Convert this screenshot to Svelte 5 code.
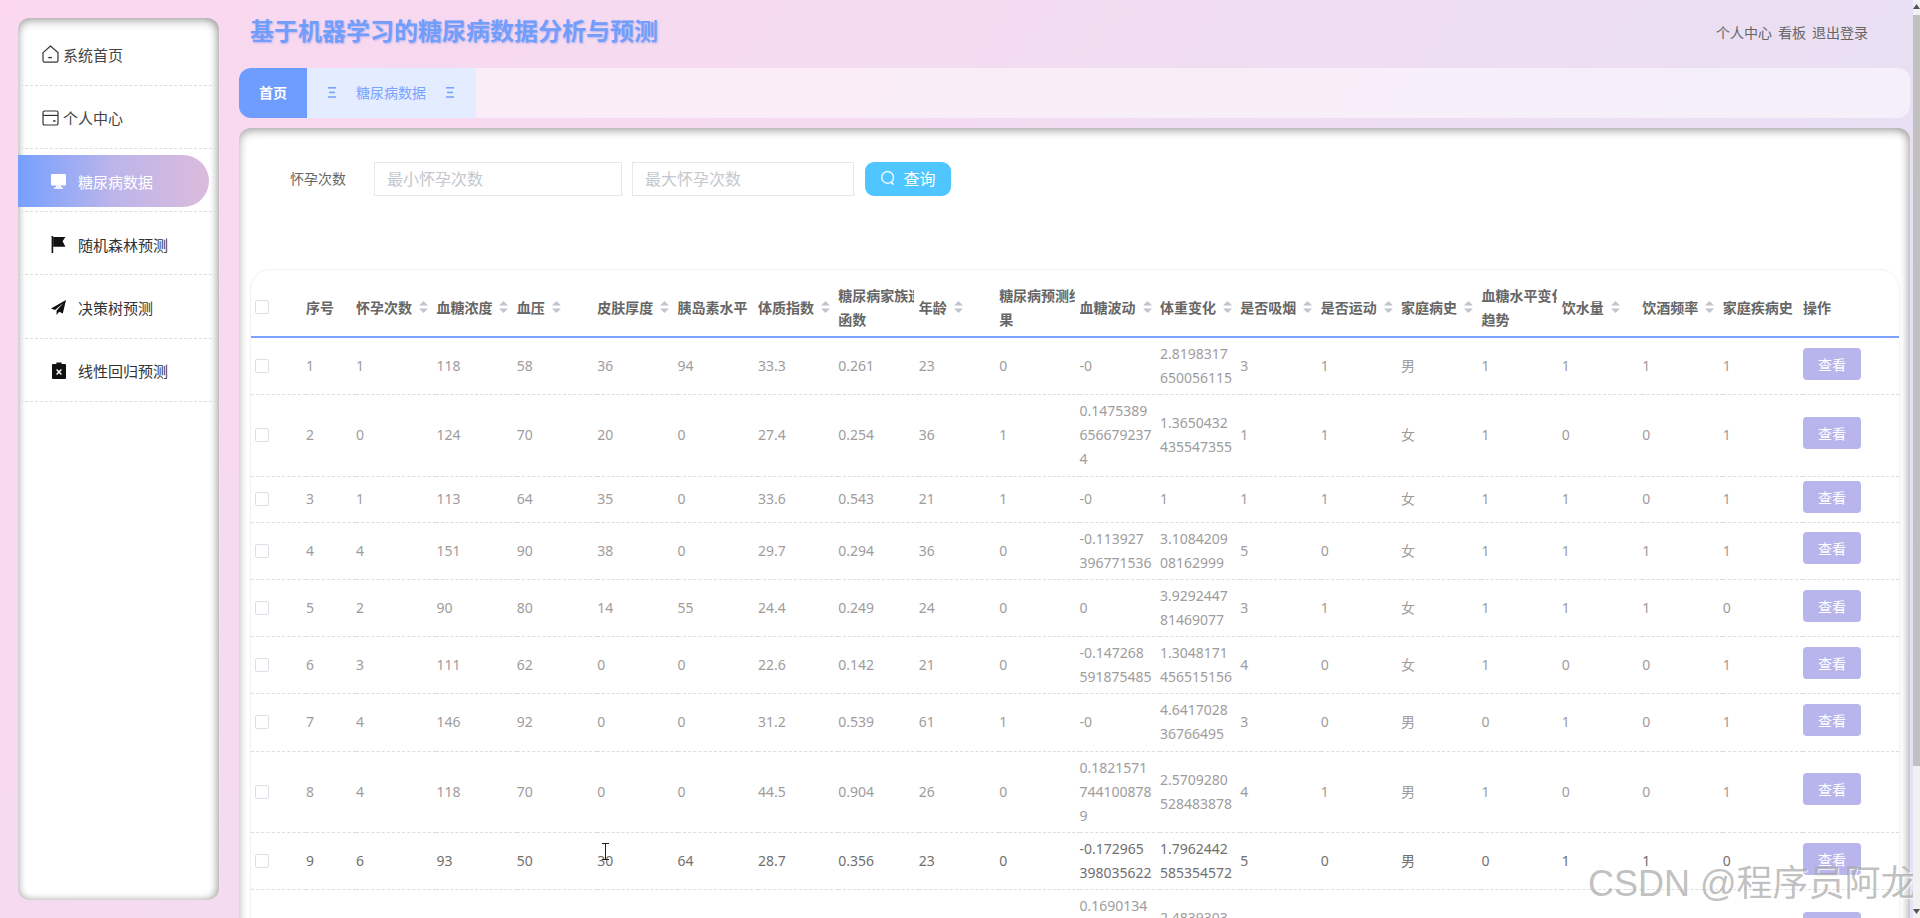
<script>
  const menu = [
    { label: '系统首页', icon: 'home' },
    { label: '个人中心', icon: 'card' },
    { label: '糖尿病数据', icon: 'monitor', active: true },
    { label: '随机森林预测', icon: 'flag' },
    { label: '决策树预测', icon: 'plane' },
    { label: '线性回归预测', icon: 'clip' }
  ];
  const headers = [
    { t: ['序号'] },
    { t: ['怀孕次数'], s: 1 },
    { t: ['血糖浓度'], s: 1 },
    { t: ['血压'], s: 1 },
    { t: ['皮肤厚度'], s: 1 },
    { t: ['胰岛素水平'] },
    { t: ['体质指数'], s: 1 },
    { t: ['糖尿病家族遗', '函数'] },
    { t: ['年龄'], s: 1 },
    { t: ['糖尿病预测结', '果'] },
    { t: ['血糖波动'], s: 1 },
    { t: ['体重变化'], s: 1 },
    { t: ['是否吸烟'], s: 1 },
    { t: ['是否运动'], s: 1 },
    { t: ['家庭病史'], s: 1 },
    { t: ['血糖水平变化', '趋势'] },
    { t: ['饮水量'], s: 1 },
    { t: ['饮酒频率'], s: 1 },
    { t: ['家庭疾病史'] },
    { t: ['操作'] }
  ];
  const rows = [
    ['1','1','118','58','36','94','33.3','0.261','23','0','-0','2.8198317\n650056115','3','1','男','1','1','1','1'],
    ['2','0','124','70','20','0','27.4','0.254','36','1','0.1475389\n656679237\n4','1.3650432\n435547355','1','1','女','1','0','0','1'],
    ['3','1','113','64','35','0','33.6','0.543','21','1','-0','1','1','1','女','1','1','0','1'],
    ['4','4','151','90','38','0','29.7','0.294','36','0','-0.113927\n396771536','3.1084209\n08162999','5','0','女','1','1','1','1'],
    ['5','2','90','80','14','55','24.4','0.249','24','0','0','3.9292447\n81469077','3','1','女','1','1','1','0'],
    ['6','3','111','62','0','0','22.6','0.142','21','0','-0.147268\n591875485','1.3048171\n456515156','4','0','女','1','0','0','1'],
    ['7','4','146','92','0','0','31.2','0.539','61','1','-0','4.6417028\n36766495','3','0','男','0','1','0','1'],
    ['8','4','118','70','0','0','44.5','0.904','26','0','0.1821571\n744100878\n9','2.5709280\n528483878','4','1','男','1','0','0','1'],
    ['9','6','93','50','30','64','28.7','0.356','23','0','-0.172965\n398035622','1.7962442\n585354572','5','0','男','0','1','1','0'],
    ['10','1','125','72','0','0','32.1','0.412','30','0','0.1690134\n582741093\n6','2.4839303\n716240581','2','1','女','1','0','1','1']
  ];
</script>

<div class="page">
  <aside class="side">
    <ul class="menu">
      {#each menu as m}
        <li class="item" class:active={m.active} class:plain={m.icon === 'home' || m.icon === 'card'}>
          <span class="mi">
            {#if m.icon === 'home'}
              <svg width="17" height="18" viewBox="0 0 17 18" fill="none" stroke="#333" stroke-width="1.2"><path d="M1 7.6 8.5 1 16 7.6V15.5a1.6 1.6 0 0 1-1.6 1.6H2.6A1.6 1.6 0 0 1 1 15.5Z"/><path d="M6.3 12.6h3.6" stroke-width="1.4"/></svg>
            {:else if m.icon === 'card'}
              <svg width="17" height="16" viewBox="0 0 17 16" fill="none" stroke="#333" stroke-width="1.2"><rect x="1" y="1" width="15" height="14" rx="1.6"/><path d="M1 5.4h15"/><path d="M11 11h2.6" stroke-width="1.4"/></svg>
            {:else if m.icon === 'monitor'}
              <svg width="15" height="15" viewBox="0 0 15 15" fill="#fff"><rect x="0" y="0" width="15" height="11.5" rx="1"/><rect x="5" y="11.5" width="5" height="2"/><rect x="3" y="13.4" width="9" height="1.4"/></svg>
            {:else if m.icon === 'flag'}
              <svg width="15" height="17" viewBox="0 0 15 17" fill="#111"><rect x="0.6" y="0" width="1.6" height="17"/><path d="M2.2 1H14.4L11.6 5.2 14.4 10.8H2.2Z"/></svg>
            {:else if m.icon === 'plane'}
              <svg width="15" height="15" viewBox="0 0 15 15" fill="#111"><path d="M15 0 0 8.4l4 1.6L12.6 3 5.6 10.6V15l2.6-3.2 3.6 1.6Z"/></svg>
            {:else}
              <svg width="14" height="17" viewBox="0 0 14 17"><path fill="#111" d="M4.4 2V.6h5.2V2H13a1 1 0 0 1 1 1v13a1 1 0 0 1-1 1H1a1 1 0 0 1-1-1V3a1 1 0 0 1 1-1Z"/><path stroke="#fff" stroke-width="1.4" d="m4.6 7.6 4.8 5M9.4 7.6l-4.8 5"/></svg>
            {/if}
          </span>
          <span class="ml">{m.label}</span>
        </li>
      {/each}
    </ul>
  </aside>

  <main class="main">
    <header class="bar">
      <h1 class="title">基于机器学习的糖尿病数据分析与预测</h1>
      <nav class="links"><span>个人中心</span><span>看板</span><span>退出登录</span></nav>
    </header>

    <div class="tabs">
      <div class="tab home">首页</div>
      <div class="tab cur">
        <svg width="8" height="11" viewBox="0 0 8 11" fill="#7ba2ff"><rect y="0" width="8" height="1.6"/><rect x="1" y="4.6" width="6" height="1.6"/><rect y="9.2" width="8" height="1.6"/></svg>
        <span>糖尿病数据</span>
        <svg width="8" height="11" viewBox="0 0 8 11" fill="#7ba2ff"><rect y="0" width="8" height="1.6"/><rect x="1" y="4.6" width="6" height="1.6"/><rect y="9.2" width="8" height="1.6"/></svg>
      </div>
    </div>

    <section class="card">
      <form class="search">
        <span class="lab">怀孕次数</span>
        <input class="inp a" placeholder="最小怀孕次数" />
        <input class="inp b" placeholder="最大怀孕次数" />
        <button type="button" class="go">
          <svg width="16" height="16" viewBox="0 0 16 16" fill="none" stroke="#fff" stroke-width="1.5"><circle cx="7.6" cy="7.4" r="5.9" opacity=".85"/><path d="m11 12 2.6 2.6"/></svg>
          <span>查询</span>
        </button>
      </form>

      <div class="tw">
        <table>
          <colgroup>
            <col class="c0" /><col class="c1" />
            {#each Array(18) as _}<col class="cn" />{/each}
            <col class="cl" />
          </colgroup>
          <thead>
            <tr>
              <th class="cbc"><span class="cb"></span></th>
              {#each headers as h}
                <th>
                  <div class="hc">
                    {#each h.t as line, i}
                      <div class="hl">{line}{#if h.s && i === 0}<svg class="sort" width="9" height="12" viewBox="0 0 9 12" fill="#c0c4cc"><path d="M4.5 0 9 4.6H0Z"/><path d="M0 7.4H9L4.5 12Z"/></svg>{/if}</div>
                    {/each}
                  </div>
                </th>
              {/each}
            </tr>
          </thead>
          <tbody>
            {#each rows as r, ri}
              <tr class:hov={ri === 8}>
                <td class="cbc"><span class="cb"></span></td>
                {#each r as c}
                  <td>{#each c.split('\n') as l}<span class="ln">{l}</span>{/each}</td>
                {/each}
                <td><button type="button" class="view">查看</button></td>
              </tr>
            {/each}
          </tbody>
        </table>
      </div>
    </section>
  </main>

  <div class="ibeam" aria-hidden="true">
    <svg width="9" height="17" viewBox="0 0 9 17" fill="none" stroke="#222" stroke-width="1"><path d="M1 .5h7M4.5.5v16M1 16.5h7"/></svg>
  </div>
  <div class="wm">CSDN @程序员阿龙</div>
  <div class="sb" aria-hidden="true">
    <svg class="ar u" width="7" height="5" viewBox="0 0 7 5" fill="#555"><path d="M3.5 0 7 5H0Z"/></svg>
    <div class="th"></div>
    <svg class="ar d" width="7" height="5" viewBox="0 0 7 5" fill="#555"><path d="M0 0H7L3.5 5Z"/></svg>
  </div>
</div>

<style>
  :global(html), :global(body) { margin: 0; height: 918px; overflow: hidden; }
  * { box-sizing: border-box; }
  .page {
    position: relative;
    width: 1920px;
    height: 918px;
    overflow: hidden;
    display: flex;
    padding: 0 10px 0 18px;
    gap: 20px;
    background: linear-gradient(125deg, #fbd8ef 0%, #f4dbf0 35%, #e3e2f6 100%);
    font-family: "Noto Sans", "Noto Sans CJK SC", sans-serif;
    font-size: 14px;
  }
  .side {
    flex: none;
    width: 201px;
    height: 882px;
    margin-top: 18px;
    background: #fff;
    border-radius: 12px;
    box-shadow: inset 0 4px 8px rgba(0,0,0,.24), inset 3px 0 7px rgba(0,0,0,.06), inset -4px 0 7px rgba(0,0,0,.14), inset 0 -3px 7px rgba(0,0,0,.07);
  }
  .menu { list-style: none; margin: 0; padding: 4.3px 0 0; }
  .item {
    height: 63.3px;
    border-bottom: 1px dashed #ddd;
    position: relative;
    display: flex;
    align-items: center;
    padding: 2px 0 0 31px;
    gap: 12px;
    color: #333;
    font-size: 15px;
    font-family: "Noto Sans CJK SC", sans-serif;
    margin: 0 2px;
  }
  .item.plain { padding-left: 22px; gap: 4px; color: #444; }
  .mi { flex: none; width: 15px; display: flex; justify-content: center; }
  .item.plain .mi { width: 17px; }
  .item.active { color: #fff; }
  .item.active::before {
    content: "";
    position: absolute;
    left: -2px; top: 6px;
    width: 191px; height: 52px;
    background: linear-gradient(90deg, #76a0ff 0%, #bcb5ea 50%, #dcbbdc 100%);
    border-radius: 0 26px 26px 0;
  }
  .mi, .ml { position: relative; }

  .main { flex: 1; min-width: 0; display: flex; flex-direction: column; }
  .bar { height: 68px; flex: none; display: flex; justify-content: space-between; align-items: flex-start; padding: 0 42px 0 11px; }
  .title { margin: 13px 0 0; font-size: 24px; line-height: 34px; font-weight: 700; color: #729dfb; font-family: "Noto Sans CJK SC", sans-serif; text-shadow: 1px 1px 2px rgba(90,130,240,.45); }
  .links { display: flex; gap: 6px; margin-top: 22px; line-height: 20px; color: #666; font-family: "Noto Sans CJK SC", sans-serif; }

  .tabs { height: 50px; flex: none; display: flex; background: rgba(255,255,255,.5); border-radius: 12px; overflow: hidden; font-family: "Noto Sans CJK SC", sans-serif; line-height: 20px; }
  .tab { display: flex; align-items: center; height: 100%; padding-bottom: 2px; }
  .home { width: 68px; justify-content: center; background: #6e9cff; color: #fff; font-weight: 700; }
  .cur { width: 169px; padding-left: 21px; gap: 20px; background: #e3edff; color: #7ba2ff; }

  .card {
    margin-top: 10px;
    flex: 1;
    background: #fff;
    border-radius: 12px 12px 0 0;
    box-shadow: inset 0 4px 8px rgba(0,0,0,.24), inset 3px 0 7px rgba(0,0,0,.06), inset -4px 0 7px rgba(0,0,0,.14);
    padding: 34px 10px 0 11px;
  }
  .search { display: flex; align-items: center; height: 34px; padding-left: 40px; font-family: "Noto Sans CJK SC", sans-serif; }
  .lab { width: 84px; color: #666; margin-top: -2px; }
  .inp { height: 34px; border: 1px solid #e8e8e8; padding: 0 12px 2px; font-size: 16px; font-family: inherit; outline: none; color: #666; background: #fff; border-radius: 0; }
  .inp::placeholder { color: #c4c7ce; }
  .a { width: 248px; margin-right: 10px; }
  .b { width: 222px; margin-right: 11px; }
  .go { width: 86px; height: 34px; border: 0; border-radius: 9px; background: #4fc6ff; color: #fff; font-size: 16px; font-family: inherit; display: flex; align-items: center; justify-content: center; gap: 7px; padding: 0 0 2px; }

  .tw { margin-top: 73px; border: 1px solid #f2f2f2; border-radius: 20px 20px 0 0; overflow: hidden; width: 1650px; }
  table { width: 1648px; table-layout: fixed; border-collapse: separate; border-spacing: 0; line-height: 24px; }
  .c0 { width: 55px; }
  .c1 { width: 50px; }
  .cn { width: 80.4px; }
  .cl { width: 95.8px; }
  th { height: 68px; padding: 8px 0 0; border-bottom: 2px solid #7ba2ff; text-align: left; color: #666; font-weight: 700; font-family: "Noto Sans CJK SC", sans-serif; vertical-align: middle; }
  .hc { width: 76px; overflow: hidden; }
  .hl { white-space: nowrap; display: flex; align-items: center; }
  .sort { margin-left: 7px; flex: none; }
  td { padding: 4.1px 0 4.2px; border-bottom: 1px dashed #ddd; color: #a09c9c; vertical-align: middle; }
  .ln { display: block; white-space: nowrap; }
  tr.hov td { color: #707070; }
  th.cbc, td.cbc { padding-left: 4px; }
  .cb { display: block; width: 14px; height: 14px; border: 1px solid #dcdfe6; border-radius: 2px; background: #fff; }
  .view { display: block; width: 58px; height: 32px; margin-bottom: 4.7px; border: 0; border-radius: 4px; background: #b8b5ec; color: #fff; font-size: 14px; font-family: "Noto Sans CJK SC", sans-serif; padding: 0; }

  .ibeam { position: absolute; left: 601px; top: 843px; line-height: 0; }
  .wm {
    position: absolute; left: 1588px; top: 859px;
    font-size: 36px; line-height: 50px; white-space: nowrap;
    color: rgba(140,140,140,.55);
    font-family: "Liberation Sans", "Noto Sans CJK SC", sans-serif;
    text-shadow: 1px 1px 1px rgba(255,255,255,.8);
  }
  .sb { position: absolute; right: 0; top: 0; width: 7px; height: 918px; background: #f1f1f1; }
  .th { position: absolute; left: 0; top: 15px; width: 7px; height: 751px; background: #c1c1c1; }
  .ar { position: absolute; left: 0; }
  .u { top: 4px; }
  .d { bottom: 4px; }
</style>
